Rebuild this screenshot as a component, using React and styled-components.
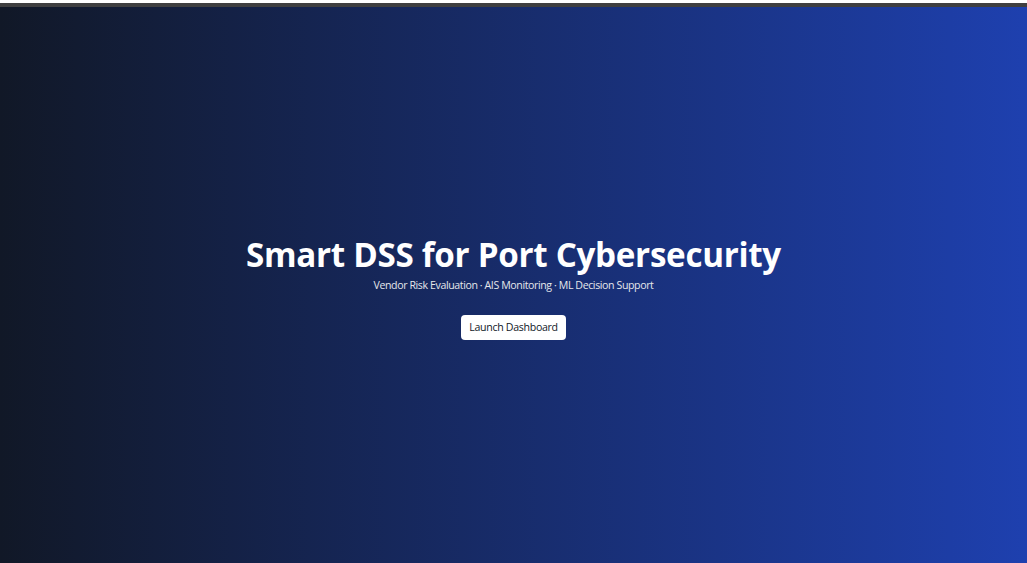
import React from 'react'
import styled, { createGlobalStyle } from 'styled-components'

const GlobalStyle = createGlobalStyle`
    html, body {
        margin: 0;
        padding: 0;
        background: #ffffff;
    }
    body {
        font-family: "Open Sans", "Noto Sans", Arial, sans-serif;
    }
`

function App() {
    return (
        <>
            <GlobalStyle />
            <Page>
                <TopBar />
                <Hero>
                    <Title>Smart DSS for Port Cybersecurity</Title>
                    <Subtitle>Vendor Risk Evaluation · AIS Monitoring · ML Decision Support</Subtitle>
                    <LaunchButton>Launch Dashboard</LaunchButton>
                </Hero>
            </Page>
        </>
    )
}

export default App

const Page = styled.div`
    display: flex;
    flex-direction: column;
    height: 563px;
    padding-top: 3px;
    box-sizing: border-box;
`

const TopBar = styled.div`
    height: 4px;
    background-color: #3f3f40;
`

const Hero = styled.div`
    flex: 1;
    display: flex;
    flex-direction: column;
    align-items: center;
    justify-content: center;
    background: linear-gradient(to right, #111827, #1e40af);
    color: #ffffff;
    padding-top: 2px;
`

const Title = styled.h1`
    margin: 0;
    font-size: 33.2px;
    font-weight: 700;
    letter-spacing: -0.3px;
    line-height: 44px;
`

const Subtitle = styled.p`
    margin: 0 0 22px 0;
    font-size: 10.6px;
    line-height: 16px;
    color: #e5e7eb;
    letter-spacing: -0.4px;
`

const LaunchButton = styled.button`
    font-family: inherit;
    font-size: 10.6px;
    letter-spacing: -0.3px;
    color: #111827;
    background: #ffffff;
    border: none;
    border-radius: 4px;
    width: 105px;
    height: 25px;
    padding: 0;
    cursor: pointer;
`
